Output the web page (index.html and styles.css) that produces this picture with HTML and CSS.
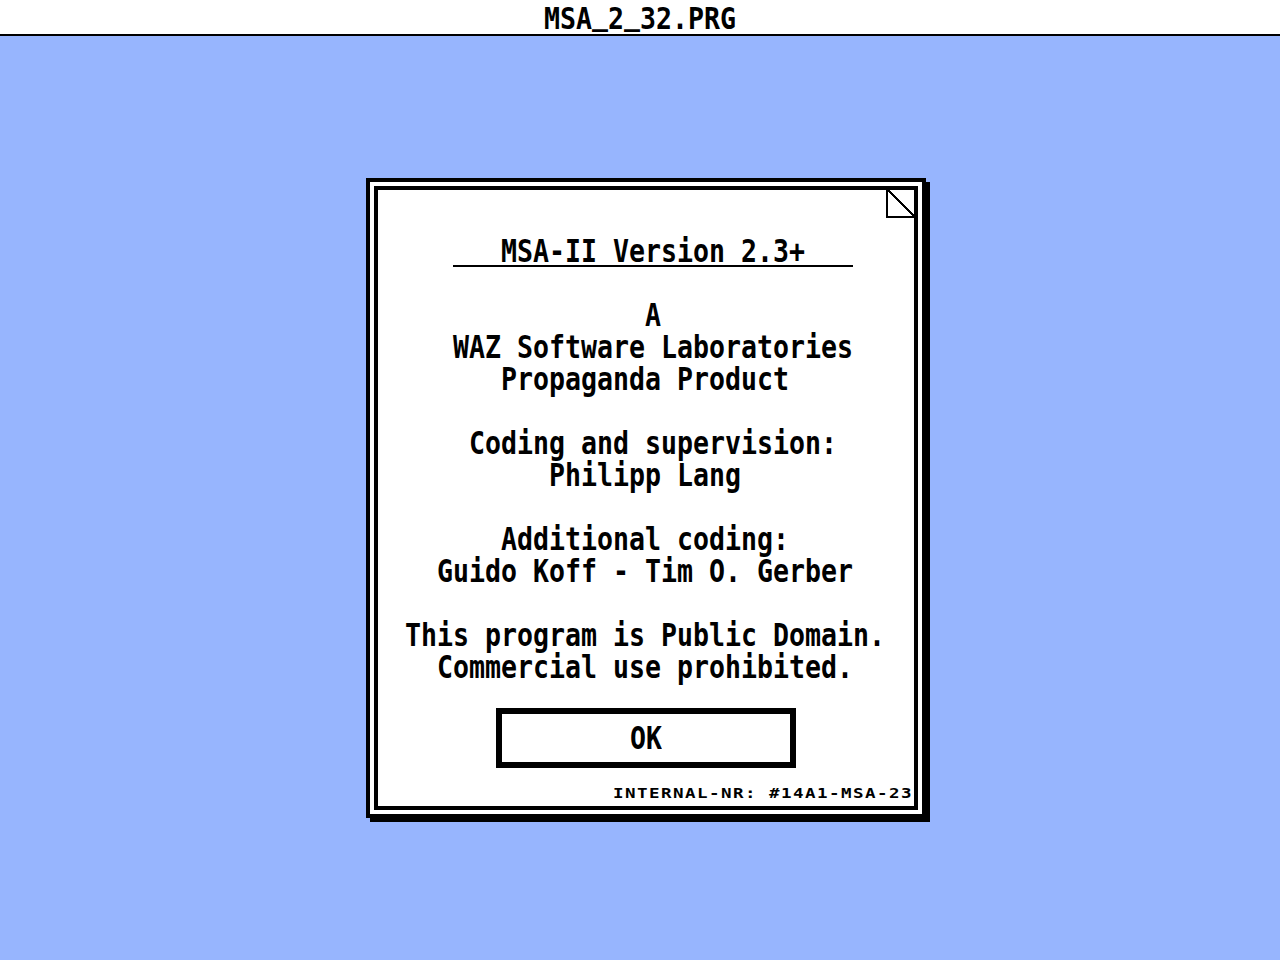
FILE: index.html
```html
<!DOCTYPE html>
<html>
<head>
<meta charset="utf-8">
<title>MSA_2_32.PRG</title>
<link rel="stylesheet" href="styles.css">
</head>
<body>
<div class="menubar"><span class="t">MSA<span class="us">_</span>2<span class="us">_</span>32.PRG</span></div>
<div class="desk">
  <div class="dialog">
    <div class="panel">
      <svg class="corner" width="28" height="28" viewBox="0 0 28 28" shape-rendering="crispEdges">
        <rect x="0" y="0" width="2" height="28" fill="#000"/>
        <rect x="0" y="26" width="28" height="2" fill="#000"/>
        <path d="M2 0 L28 26" stroke="#000" stroke-width="2" fill="none"/>
      </svg>
      <div class="text">
        <div class="row"><span class="ul"><span class="t">   MSA-II Version 2.3+   </span></span></div>
        <div class="row"> </div>
        <div class="row"><span class="t">               A</span></div>
        <div class="row"><span class="t">   WAZ Software Laboratories</span></div>
        <div class="row"><span class="t">      Propaganda Product</span></div>
        <div class="row"> </div>
        <div class="row"><span class="t">    Coding and supervision:</span></div>
        <div class="row"><span class="t">         Philipp Lang</span></div>
        <div class="row"> </div>
        <div class="row"><span class="t">      Additional coding:</span></div>
        <div class="row"><span class="t">  Guido Koff - Tim O. Gerber</span></div>
        <div class="row"> </div>
        <div class="row"><span class="t">This program is Public Domain.</span></div>
        <div class="row"><span class="t">  Commercial use prohibited.</span></div>
      </div>
      <div class="button"><span class="t">OK</span></div>
      <div class="internal"><span class="small">INTERNAL-NR: #14A1-MSA-23</span></div>
    </div>
  </div>
</div>
</body>
</html>
```
FILE: styles.css
```css
html, body {
  margin: 0;
  padding: 0;
}
body {
  background: #97b5fe;
  width: 1280px;
  height: 960px;
  overflow: hidden;
  font-family: "DejaVu Sans Mono", "Liberation Mono", monospace;
  font-size: 26.58px;
  font-weight: bold;
  color: #000;
}
.t {
  display: inline-block;
  white-space: pre;
  transform: scaleY(1.22);
  transform-origin: 50% 50%;
}
.menubar {
  height: 31px;
  padding-top: 3px;
  line-height: 31px;
  background: #fff;
  border-bottom: 2px solid #000;
  text-align: center;
}
.menubar .t {
  transform: scaleY(1.12);
}
.us {
  position: relative;
  top: -4px;
}
.desk {
  padding: 142px 0 0 366px;
}
.dialog {
  width: 552px;
  height: 632px;
  border: 4px solid #000;
  background: #fff;
  box-shadow: 4px 4px 0 #000;
}
.panel {
  position: relative;
  margin: 4px;
  height: 616px;
  border: 4px solid #000;
  display: flex;
  flex-direction: column;
}
.corner {
  position: absolute;
  top: 0;
  right: 0;
  display: block;
}
.text {
  margin-top: 45px;
  padding-left: 27px;
}
.row {
  height: 32px;
  line-height: 32px;
  white-space: pre;
}
.ul {
  display: inline-block;
  height: 30px;
  line-height: 32px;
  margin-left: 48px;
  border-bottom: 2px solid #000;
  vertical-align: top;
}
.button {
  margin: 25px 0 0 118px;
  width: 288px;
  height: 48px;
  border: 6px solid #000;
  line-height: 48px;
  text-align: center;
}
.internal {
  margin-top: 11px;
  height: 20px;
  line-height: 20px;
  padding-right: 2px;
  text-align: right;
}
.small {
  display: inline-block;
  font-size: 14px;
  letter-spacing: 1.17px;
  margin-right: -1.17px;
  transform: scaleX(1.25);
  transform-origin: 100% 50%;
}
```
